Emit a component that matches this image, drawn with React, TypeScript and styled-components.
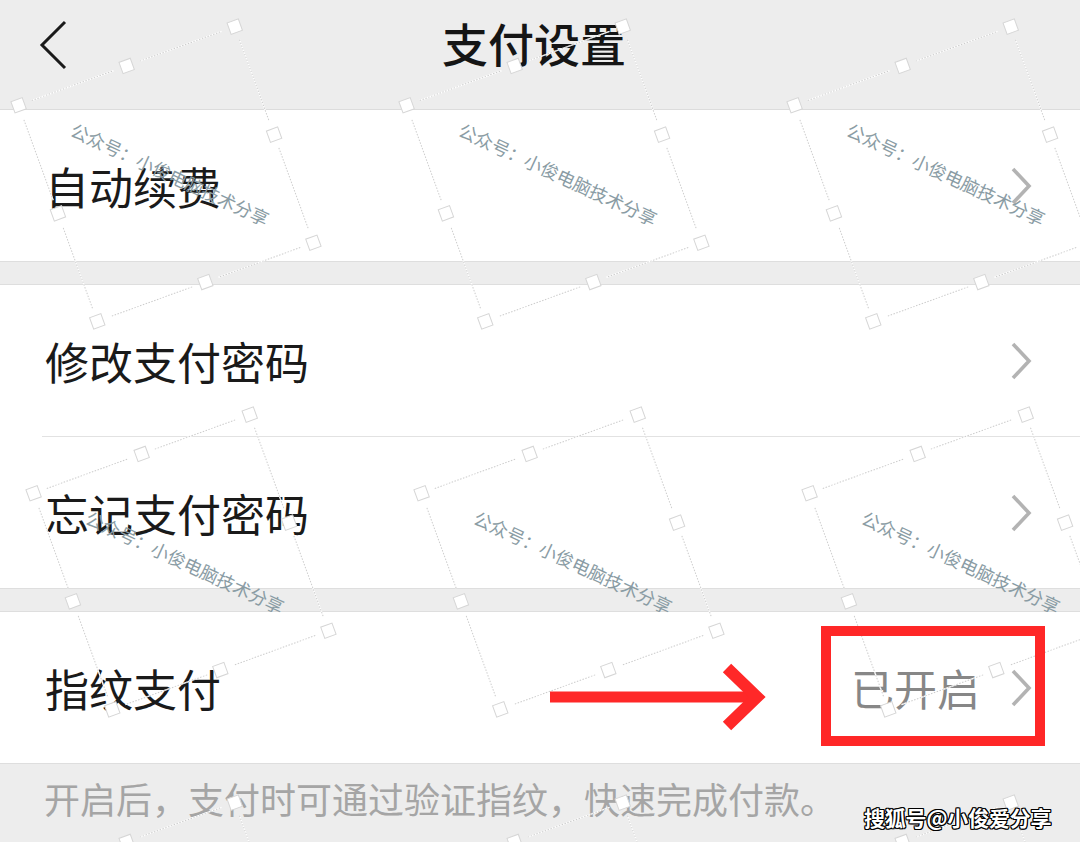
import styled, { createGlobalStyle } from 'styled-components';

const GlobalStyle = createGlobalStyle`
  html, body {
    margin: 0;
    padding: 0;
    background: #ededed;
  }
  body {
    font-family: "Noto Sans CJK SC", "Noto Sans", sans-serif;
  }
`;

const WATERMARK = '公众号：小俊电脑技术分享';

interface Setting {
  label: string;
  value?: string;
  divider?: boolean;
}

const groups: Setting[][] = [
  [{ label: '自动续费' }],
  [{ label: '修改支付密码', divider: true }, { label: '忘记支付密码' }],
  [{ label: '指纹支付', value: '已开启' }],
];

// 水印格子：每行错开 15px，只有落在页面里的格子才写字
const tiles: { x: number; y: number; text: boolean }[] = [];
for (let j = -1; j <= 2; j++) {
  for (let i = -1; i <= 3; i++) {
    const x = 166 + 388 * i + (Math.abs(j) % 2 === 1 ? 15 : 0);
    const y = 174 + 388 * j;
    tiles.push({ x, y, text: x > 0 && x < 1080 && y > 0 && y < 842 });
  }
}

const corners: [number, number][] = [
  [-115, -115],
  [0, -115],
  [115, -115],
  [115, 0],
  [115, 115],
  [0, 115],
  [-115, 115],
  [-115, 0],
];

const Chevron = () => (
  <svg width="22" height="40" viewBox="0 0 22 40">
    <polyline points="3,3 19,20 3,37" fill="none" stroke="#b3b3b3" strokeWidth="3.6" />
  </svg>
);

const Frame = () => (
  <svg width="340" height="340" viewBox="-170 -170 340 340">
    <g transform="rotate(-20)">
      {corners.map(([x1, y1], k) => {
        const [x2, y2] = corners[(k + 1) % corners.length];
        const len = Math.hypot(x2 - x1, y2 - y1);
        const ux = (x2 - x1) / len;
        const uy = (y2 - y1) / len;
        const a = [x1 + ux * 14, y1 + uy * 14];
        const b = [x2 - ux * 14, y2 - uy * 14];
        return (
          <g key={k}>
            <line x1={a[0]} y1={a[1]} x2={b[0]} y2={b[1]} stroke="#ffffff" strokeWidth="1.4" />
            <line x1={a[0]} y1={a[1]} x2={b[0]} y2={b[1]} stroke="#cdcdcd" strokeWidth="1" strokeDasharray="1.5 1.5" />
          </g>
        );
      })}
      {corners.map(([x, y], k) => (
        <rect key={k} x={x - 6} y={y - 6} width="12" height="12" fill="#ffffff" stroke="#d6d6d6" strokeWidth="1" />
      ))}
    </g>
  </svg>
);

const App = () => {
  return (
    <Page>
      <GlobalStyle />
      <Header>
        <Back>
          <svg width="30" height="50" viewBox="0 0 30 50">
            <polyline points="26,2 3,25 26,48" fill="none" stroke="#1a1a1a" strokeWidth="3" />
          </svg>
        </Back>
        <Title>支付设置</Title>
        <span />
      </Header>

      {groups.map((group, gi) => (
        <Group key={gi} $first={gi === 0}>
          {group.map((item) => (
            <Row key={item.label}>
              <RowInner $divider={!!item.divider}>
                <Label>{item.label}</Label>
                <Right>
                  {item.value && <Value>{item.value}</Value>}
                  <Chevron />
                </Right>
              </RowInner>
            </Row>
          ))}
        </Group>
      ))}

      <Footer>开启后，支付时可通过验证指纹，快速完成付款。</Footer>

      <WatermarkLayer>
        {tiles.map((t, k) => (
          <Tile key={k} style={{ left: t.x, top: t.y }}>
            <Frame />
            {t.text && <TileText>{WATERMARK}</TileText>}
          </Tile>
        ))}
      </WatermarkLayer>

      <Arrow width="225" height="75" viewBox="0 0 225 75">
        <line x1="5" y1="37" x2="208" y2="37" stroke="#ff2828" strokeWidth="11" />
        <polyline points="182,8 212,37 182,66" fill="none" stroke="#ff2828" strokeWidth="12" />
      </Arrow>
      <RedBox />

      <Sohu>搜狐号@小俊爱分享</Sohu>
    </Page>
  );
};

export default App;

const Page = styled.div`
  position: relative;
  width: 1080px;
  height: 842px;
  overflow: hidden;
  background: #ededed;
`;

const Header = styled.header`
  height: 110px;
  box-sizing: border-box;
  padding-bottom: 20px;
  border-bottom: 1px solid #dcdcdc;
  display: grid;
  grid-template-columns: 1fr auto 1fr;
  align-items: center;
`;

const Back = styled.div`
  display: flex;
  padding-left: 39px;
  padding-top: 1px;
`;

const Title = styled.h1`
  margin: 0 0 6px;
  padding-right: 12px;
  font-size: 46px;
  font-weight: 500;
  color: #151515;
  line-height: 1;
`;

const Group = styled.section<{ $first: boolean }>`
  background: #ffffff;
  border-top: ${(p) => (p.$first ? 'none' : '1px solid #dedede')};
  border-bottom: 1px solid #dedede;
  margin-top: ${(p) => (p.$first ? '0' : '22px')};
`;

const Row = styled.div`
  padding-left: 42px;
`;

const RowInner = styled.div<{ $divider: boolean }>`
  height: ${(p) => (p.$divider ? '152px' : '151px')};
  box-sizing: border-box;
  border-bottom: ${(p) => (p.$divider ? '1px solid #e2e2e2' : 'none')};
  display: flex;
  align-items: center;
  justify-content: space-between;
  padding: 0 48px 0 3px;
`;

const Label = styled.span`
  font-size: 44px;
  color: #1a1a1a;
  line-height: 1;
`;

const Right = styled.div`
  display: flex;
  align-items: center;
  gap: 30px;
`;

const Value = styled.span`
  font-size: 43px;
  color: #878787;
  line-height: 1;
`;

const Footer = styled.p`
  margin: 0;
  padding: 9px 0 0 44px;
  font-size: 36px;
  line-height: 50px;
  color: #a5a5a5;
`;

const WatermarkLayer = styled.div`
  position: absolute;
  inset: 0;
  pointer-events: none;
`;

const Tile = styled.div`
  position: absolute;
  width: 340px;
  height: 340px;
  margin-left: -170px;
  margin-top: -170px;

  svg {
    display: block;
  }
`;

const TileText = styled.span`
  position: absolute;
  left: 50%;
  top: 50%;
  transform: translate(-48%, -52%) rotate(25deg);
  white-space: nowrap;
  font-size: 18px;
  line-height: 1;
  color: #8a9ca4;
`;

const Arrow = styled.svg`
  position: absolute;
  left: 545px;
  top: 660px;
`;

const RedBox = styled.div`
  position: absolute;
  left: 821px;
  top: 626px;
  width: 224px;
  height: 120px;
  box-sizing: border-box;
  border: 10px solid #ff2727;
`;

const Sohu = styled.div`
  position: absolute;
  left: 864px;
  top: 807px;
  font-size: 21px;
  font-weight: 700;
  line-height: 1;
  color: #ffffff;
  letter-spacing: -0.2px;
  text-shadow:
    -1px -1px 0 #000,
    1px -1px 0 #000,
    -1px 1px 0 #000,
    1px 1px 0 #000,
    0 1px 0 #000,
    0 -1px 0 #000,
    1px 0 0 #000,
    -1px 0 0 #000;
`;
